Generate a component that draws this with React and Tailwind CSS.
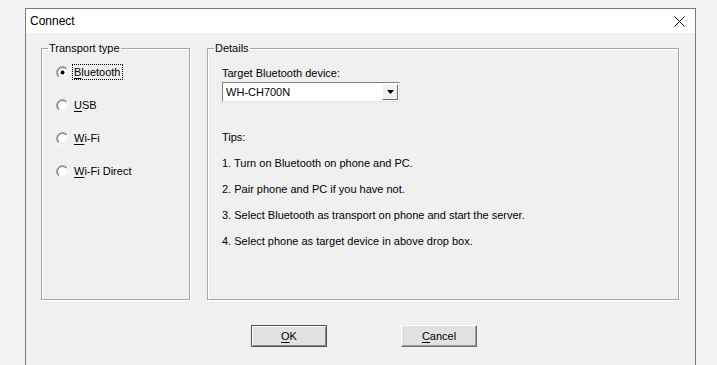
import React from "react";

const font = { fontFamily: '"Liberation Sans", Arial, sans-serif' };

function Radio({ checked }) {
  return (
    <svg width="13" height="13" viewBox="0 0 13 13" className="shrink-0">
      <defs>
        <linearGradient id="ro" x1="0" y1="0" x2="1" y2="1">
          <stop offset="0.5" stopColor="#a0a0a0" />
          <stop offset="0.5" stopColor="#ffffff" />
        </linearGradient>
        <linearGradient id="ri" x1="0" y1="0" x2="1" y2="1">
          <stop offset="0.5" stopColor="#696969" />
          <stop offset="0.5" stopColor="#e3e3e3" />
        </linearGradient>
      </defs>
      <circle cx="6.5" cy="6.5" r="6" fill="none" stroke="url(#ro)" strokeWidth="1" />
      <circle cx="6.5" cy="6.5" r="5" fill="#ffffff" stroke="url(#ri)" strokeWidth="1" />
      {checked && <circle cx="6.5" cy="6.5" r="2" fill="#000" />}
    </svg>
  );
}

function Option({ mnemonic, rest, checked, focus }) {
  return (
    <div className="flex items-center h-[16px]">
      <Radio checked={checked} />
      <span
        className={`ml-[4px] leading-[14px] px-[1px] ${
          focus ? "outline outline-1 outline-dotted outline-black" : ""
        }`}
      >
        <span className="underline underline-offset-2">{mnemonic}</span>
        {rest}
      </span>
    </div>
  );
}

function Group({ title, className, children }) {
  return (
    <fieldset
      className={`border border-[#a6a6a6] shadow-[inset_1px_1px_0_#ffffff,1px_1px_0_#ffffff] px-0 pb-0 ${className}`}
    >
      <legend className="ml-[6px] px-[1px] leading-[14px] text-[11px] text-black">
        {title}
      </legend>
      {children}
    </fieldset>
  );
}

function Button({ mnemonic, rest, isDefault }) {
  return (
    <button
      className={`w-[76px] h-[22px] bg-[#e1e1e1] text-[11px] leading-[14px] text-black ${
        isDefault
          ? "border border-[#505050] shadow-[inset_1px_1px_0_#ffffff,inset_-1px_-1px_0_#8a8a8a]"
          : "border border-t-[#ffffff] border-l-[#ffffff] border-r-[#6d6d6d] border-b-[#6d6d6d] shadow-[inset_-1px_-1px_0_#a0a0a0]"
      }`}
    >
      <span className="underline underline-offset-2">{mnemonic}</span>
      {rest}
    </button>
  );
}

export default function App() {
  const tips = [
    "1. Turn on Bluetooth on phone and PC.",
    "2. Pair phone and PC if you have not.",
    "3. Select Bluetooth as transport on phone and start the server.",
    "4. Select phone as target device in above drop box.",
  ];

  return (
    <div
      className="w-[717px] h-[365px] overflow-hidden bg-[#f3f3f3] pt-[8px] pl-[25px]"
      style={font}
    >
      {/* Window */}
      <div className="w-[671px] h-[400px] border border-[#7a7a7a] bg-[#f0f0f0] text-[11px] text-black">
        {/* Title bar */}
        <div className="h-[24px] bg-white flex items-center justify-between pl-[4px] pr-[10px]">
          <span className="text-[12px]">Connect</span>
          <svg width="11" height="11" viewBox="0 0 11 11">
            <path d="M0.5 0.5 L10.5 10.5 M10.5 0.5 L0.5 10.5" stroke="#111" strokeWidth="1" />
          </svg>
        </div>

        {/* Body */}
        <div className="pt-[8px] pl-[15px]">
          <div className="flex gap-[17px]">
            <Group title="Transport type" className="w-[149px] h-[259px]">
              <div className="flex flex-col gap-[17px] pt-[9px] pl-[14px]">
                <Option mnemonic="B" rest="luetooth" checked focus />
                <Option mnemonic="U" rest="SB" />
                <Option mnemonic="W" rest="i-Fi" />
                <Option mnemonic="W" rest="i-Fi Direct" />
              </div>
            </Group>

            <Group title="Details" className="w-[472px] h-[259px]">
              <div className="pl-[14px] pt-[11px]">
                <div className="leading-[14px]">Target Bluetooth device:</div>
                <div className="mt-[2px] w-[178px] h-[20px] bg-white border border-t-[#828282] border-l-[#828282] border-r-[#e3e3e3] border-b-[#e3e3e3] flex items-center justify-between pl-[3px] pr-[1px]">
                  <span className="leading-[14px]">WH-CH700N</span>
                  <div className="w-[16px] h-[16px] bg-[#f0f0f0] border border-t-[#ffffff] border-l-[#ffffff] border-r-[#696969] border-b-[#696969] flex items-center justify-center">
                    <svg width="7" height="4" viewBox="0 0 7 4">
                      <path d="M0 0 H7 L3.5 4 Z" fill="#000" />
                    </svg>
                  </div>
                </div>

                <div className="mt-[28px] leading-[14px]">Tips:</div>
                {tips.map((t) => (
                  <div key={t} className="mt-[12px] leading-[14px]">
                    {t}
                  </div>
                ))}
              </div>
            </Group>
          </div>

          {/* Buttons */}
          <div className="flex mt-[25px] pl-[210px] gap-[74px]">
            <Button mnemonic="O" rest="K" isDefault />
            <Button mnemonic="C" rest="ancel" />
          </div>
        </div>
      </div>
    </div>
  );
}
